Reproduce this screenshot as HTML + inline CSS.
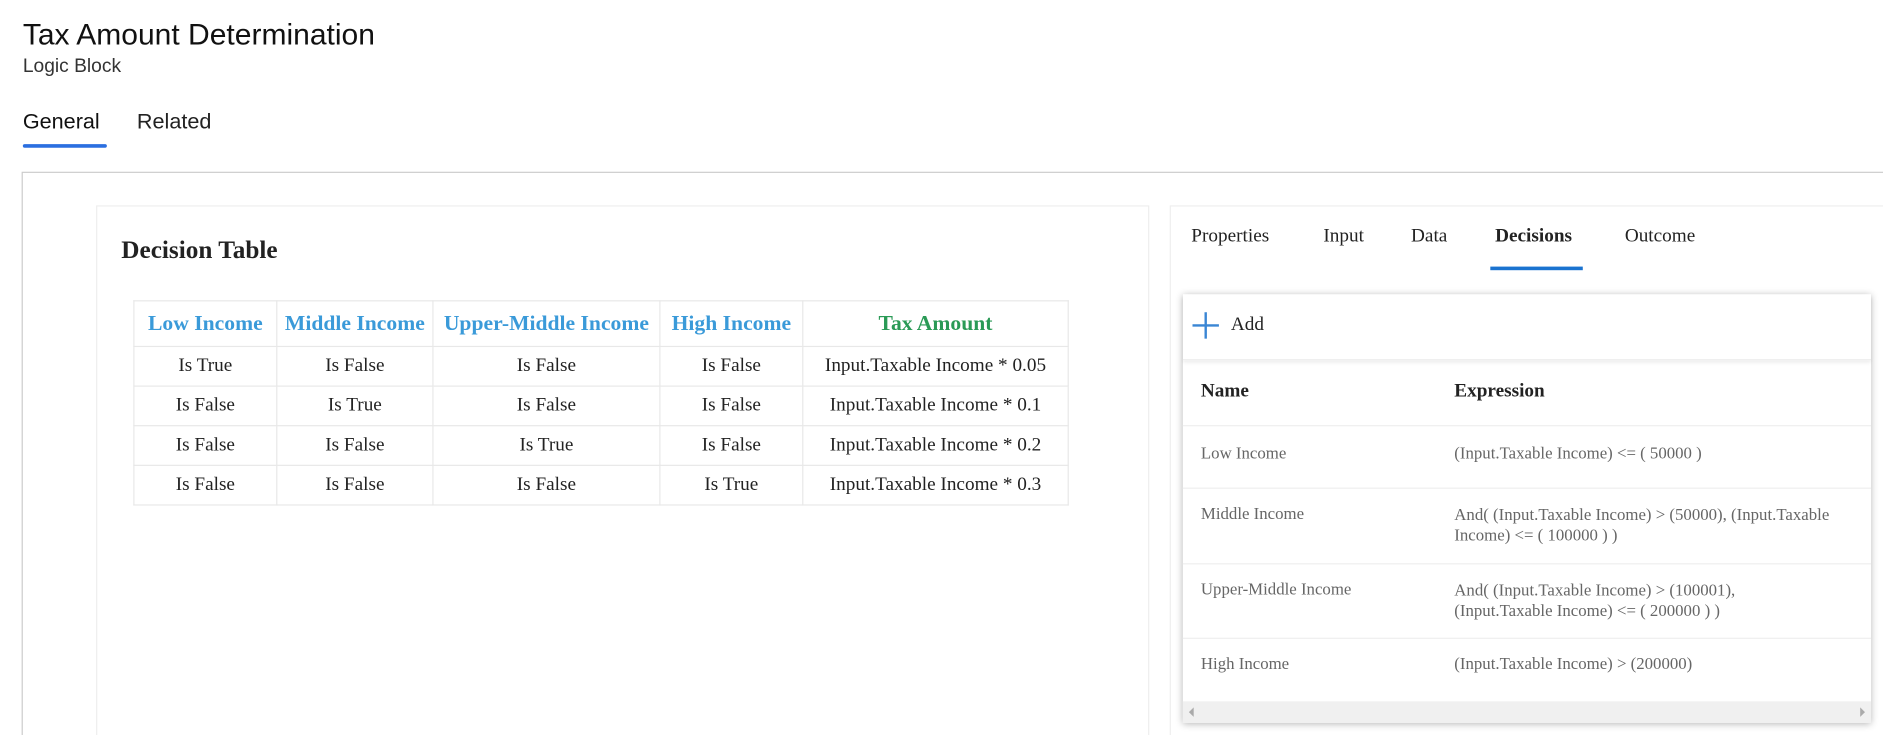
<!DOCTYPE html>
<html><head><meta charset="utf-8"><style>
*{margin:0;padding:0;box-sizing:border-box}
html,body{width:1883px;height:735px;overflow:hidden;background:#fff}
#w{position:absolute;left:0;top:0;width:1568px;height:612px;transform:scale(1.2009);transform-origin:0 0;font-family:"Liberation Sans",sans-serif;color:#111;overflow:hidden}
.a{position:absolute}
.serif{font-family:"Liberation Serif",serif}
table{border-collapse:collapse}
#dt td{border:1px solid #e8e8e8;text-align:center;font-size:16px;color:#222;height:33px;padding:0}
#dt tr:first-child td{height:38px;font-weight:bold;font-size:18px;color:#3a9ad9}
.r{position:absolute;left:0;width:573px;border-bottom:1px solid #eee;font-size:14px;color:#666}
.r span{position:absolute}
</style></head><body><div id="w">
<div class="a" style="left:19px;top:15px;font-size:25px;color:#111">Tax Amount Determination</div>
<div class="a" style="left:19px;top:47px;font-size:16px;color:#333">Logic Block</div>
<div class="a" style="left:19px;top:91px;font-size:18px;color:#111">General</div>
<div class="a" style="left:114px;top:91px;font-size:18px;color:#222">Related</div>
<div class="a" style="left:19px;top:120px;width:70px;height:3px;background:#2b6fe0;border-radius:2px"></div>
<div class="a" style="left:18px;top:143px;width:1600px;height:600px;border:1px solid #ccc"></div>
<div class="a" style="left:80px;top:171px;width:877px;height:600px;border:1px solid #eee"></div>
<div class="a serif" style="left:101px;top:196px;font-size:21px;font-weight:bold;color:#222">Decision Table</div>
<table id="dt" class="a serif" style="left:111px;top:250px;width:779px">
<tr><td style="width:119px">Low Income</td><td style="width:130px">Middle Income</td><td style="width:189px">Upper-Middle Income</td><td style="width:119px">High Income</td><td style="color:#2a9a56">Tax Amount</td></tr>
<tr><td>Is True</td><td>Is False</td><td>Is False</td><td>Is False</td><td>Input.Taxable Income * 0.05</td></tr>
<tr><td>Is False</td><td>Is True</td><td>Is False</td><td>Is False</td><td>Input.Taxable Income * 0.1</td></tr>
<tr><td>Is False</td><td>Is False</td><td>Is True</td><td>Is False</td><td>Input.Taxable Income * 0.2</td></tr>
<tr><td>Is False</td><td>Is False</td><td>Is False</td><td>Is True</td><td>Input.Taxable Income * 0.3</td></tr>
</table>
<div class="a" style="left:974px;top:171px;width:950px;height:600px;border:1px solid #eee"></div>
<div class="a serif" style="left:992px;top:188px;font-size:16px;color:#222;white-space:nowrap">Properties</div>
<div class="a serif" style="left:1102px;top:188px;font-size:16px;color:#222">Input</div>
<div class="a serif" style="left:1175px;top:188px;font-size:16px;color:#222">Data</div>
<div class="a serif" style="left:1245px;top:188px;font-size:16px;color:#222;font-weight:bold">Decisions</div>
<div class="a serif" style="left:1353px;top:188px;font-size:16px;color:#222">Outcome</div>
<div class="a" style="left:1241px;top:222px;width:77px;height:3px;background:#1a73d0"></div>
<div class="a serif" style="left:985px;top:245px;width:573px;height:357px;box-shadow:0 1px 6px rgba(0,0,0,.3);background:#fff">
 <div class="a" style="left:0;top:0;width:573px;height:55px;border-bottom:1px solid #eee;box-shadow:0 2px 3px rgba(0,0,0,.08)">
  <div class="a" style="left:18px;top:15px;width:2px;height:22px;background:#3a86d4"></div>
  <div class="a" style="left:8px;top:25px;width:22px;height:2px;background:#3a86d4"></div>
  <div class="a" style="left:40px;top:17px;font-size:16px;color:#222">Add</div>
 </div>
 <div class="r" style="top:55px;height:55px;font-size:16px;color:#222;font-weight:bold"><span style="left:15px;top:17px">Name</span><span style="left:226px;top:17px">Expression</span></div>
 <div class="r" style="top:110px;height:52px"><span style="left:15px;top:16px">Low Income</span><span style="left:226px;top:16px">(Input.Taxable Income) &lt;= ( 50000 )</span></div>
 <div class="r" style="top:162px;height:63px"><span style="left:15px;top:14px">Middle Income</span><span style="left:226px;top:14px;width:345px;line-height:17px">And( (Input.Taxable Income) &gt; (50000), (Input.Taxable Income) &lt;= ( 100000 ) )</span></div>
 <div class="r" style="top:225px;height:62px"><span style="left:15px;top:14px">Upper-Middle Income</span><span style="left:226px;top:14px;width:345px;line-height:17px">And( (Input.Taxable Income) &gt; (100001),<br>(Input.Taxable Income) &lt;= ( 200000 ) )</span></div>
 <div class="r" style="top:287px;height:52px;border:0"><span style="left:15px;top:14px">High Income</span><span style="left:226px;top:14px">(Input.Taxable Income) &gt; (200000)</span></div>
 <div class="a" style="left:0;top:339px;width:573px;height:18px;background:#f0f0f0">
  <div class="a" style="left:5px;top:5px;border:4px solid transparent;border-right:4px solid #aaa;border-left:0"></div>
  <div class="a" style="right:5px;top:5px;border:4px solid transparent;border-left:4px solid #aaa;border-right:0"></div>
 </div>
</div>
</div></body></html>
